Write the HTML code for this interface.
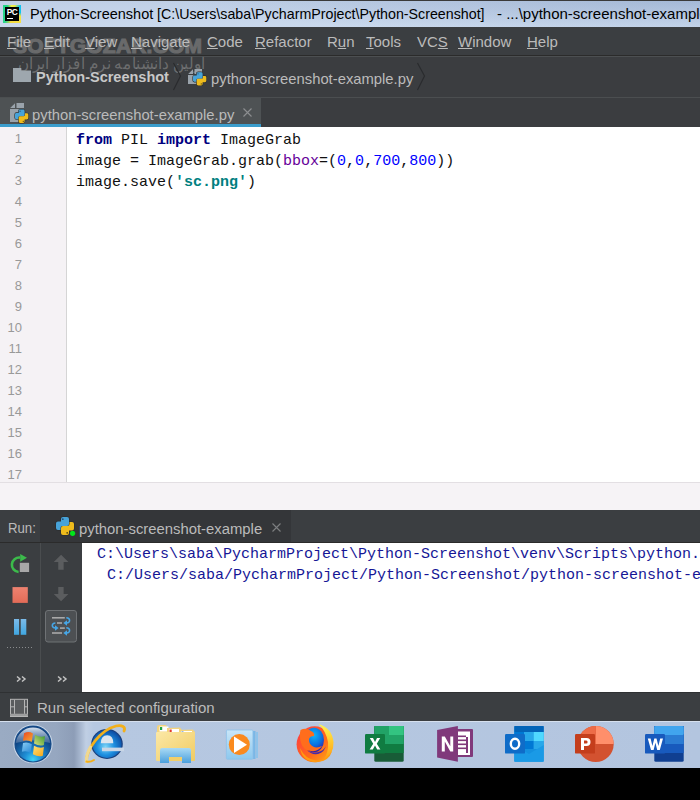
<!DOCTYPE html>
<html><head><meta charset="utf-8">
<style>
*{margin:0;padding:0;box-sizing:border-box}
html,body{width:700px;height:800px;overflow:hidden;background:#000}
body{position:relative;font-family:"Liberation Sans",sans-serif}
.abs{position:absolute}
.nw{white-space:nowrap}
svg{position:absolute;overflow:visible}
#title{left:0;top:0;width:700px;height:27px;background:radial-gradient(ellipse 520px 34px at 100% 0,rgba(70,105,160,.22),rgba(70,105,160,0)),linear-gradient(#bfcfe6,#cad9ed);border-top:1px solid #3a3a3a}
#title .t{top:4px;font-size:15px;color:#000;white-space:nowrap;transform-origin:0 0}
#menu{left:0;top:27px;width:700px;height:29px;background:#3b3e41;border-bottom:1px solid #2b2b2b}
#menu span{position:absolute;top:6px;font-size:15px;color:#bbbbbb;white-space:nowrap}
#menu u{text-decoration:underline;text-decoration-thickness:1px;text-underline-offset:1px}
#nav{left:0;top:56px;width:700px;height:41px;background:#3b3d40;border-top:1px solid #4c4f51}
#tabs{left:0;top:97px;width:700px;height:30px;background:#3b3d40;border-top:1px solid #4b4e50}
#tab{left:0;top:0;width:261px;height:26px;background:#4e5254}
#tabline{left:0;top:26px;width:261px;height:3px;background:#3b9dcc}
#editor{left:0;top:127px;width:700px;height:355px;background:#fff}
#gutter{left:0;top:0;width:67px;height:355px;background:#f5f2f5;border-right:1px solid #d5d5d5}
.ln{position:absolute;left:0;width:22px;text-align:right;font-size:13px;color:#999;line-height:16px}
.code{position:absolute;left:76px;font-family:"Liberation Mono",monospace;font-size:15px;color:#111;white-space:pre;line-height:17px}
.kw{color:#000080;font-weight:bold}
.num{color:#0000ff}
.str{color:#008080;font-weight:bold}
.kwa{color:#660099}
#below{left:0;top:482px;width:700px;height:28px;background:#f6f3f6;border-top:1px solid #e3dfe3}
#runhdr{left:0;top:510px;width:700px;height:33px;background:#3b3e41;border-bottom:1px solid #2b2b2b}
#runtab{left:40px;top:0;width:251px;height:32px;background:#343639}
#runbody{left:0;top:543px;width:700px;height:149px;background:#3b3e41}
#console{left:82px;top:0;width:618px;height:149px;background:#fff}
.con{position:absolute;font-family:"Liberation Mono",monospace;font-size:15px;color:#161696;white-space:pre;line-height:17px}
#status{left:0;top:692px;width:700px;height:29px;background:#3b3e41;border-top:1px solid #2f3133}
#taskbar{left:0;top:721px;width:700px;height:47px;border-top:1px solid #d6e0ee;background:linear-gradient(90deg,#9aabc3 0,#96a7c0 56px,#8d9db7 74px,#a9b9d1 81px,#c0cfe4 86px,#b6c8e1 94px,#b3c5df 700px)}
.wm{color:#696a6b;font-weight:bold;font-size:21px;white-space:nowrap;-webkit-text-stroke:1.1px #696a6b}
</style></head><body>
<svg width="0" height="0" style="position:absolute;left:0;top:0">
<defs>
<g id="pyb"><path d="M7,0 H11 Q13,0 13,2 V7 Q13,9 11,9 H6.5 Q4.5,9 4.5,11 V13 H2 Q0,13 0,11 V6.5 Q0,4.5 2,4.5 H5 V2 Q5,0 7,0 Z"/></g>
<g id="py">
 <use href="#pyb" fill="none" stroke="#2d2f31" stroke-width="1.6"/>
 <use href="#pyb" transform="rotate(180 9 9)" fill="none" stroke="#2d2f31" stroke-width="1.6"/>
 <use href="#pyb" fill="#47a3d9"/>
 <use href="#pyb" transform="rotate(180 9 9)" fill="#eebb1c"/>
 <circle cx="6.8" cy="2.2" r="0.9" fill="#24507a"/>
 <circle cx="11.2" cy="15.8" r="0.9" fill="#5a4a10"/>
</g>
</defs></svg>
<div id="title" class="abs">
  <div class="abs" style="left:3px;top:4px;width:18px;height:18px;background:conic-gradient(from 0deg,#f3ef4c 0deg,#e8e845 20deg,#12c2ee 45deg,#12c2ee 80deg,#f2e24a 105deg,#f4d93c 190deg,#2bd38a 220deg,#21d789 330deg,#f3ef4c 355deg)"></div>
  <div class="abs" style="left:5px;top:6px;width:14px;height:14px;background:#000"></div>
  <div class="abs nw" style="left:6.7px;top:5.7px;font-size:8.4px;font-weight:bold;color:#fff;letter-spacing:-0.5px;line-height:10px">PC</div>
  <div class="abs" style="left:7px;top:17px;width:6px;height:1.2px;background:#fff"></div>
  <div class="abs t" style="left:29.6px;transform:scaleX(.966)">Python-Screenshot</div>
  <div class="abs t" style="left:157.4px;transform:scaleX(.949)">[C:\Users\saba\PycharmProject\Python-Screenshot]</div>
  <div class="abs t" style="left:497px">- ...\python-screenshot-example.py</div>
</div>
<div id="menu" class="abs">
  <div class="abs wm" style="left:13px;top:6.5px;letter-spacing:0.2px">SOFTGOZAR.COM</div>
  <span style="left:7px"><u>F</u>ile</span>
  <span style="left:44px"><u>E</u>dit</span>
  <span style="left:85px"><u>V</u>iew</span>
  <span style="left:131px"><u>N</u>avigate</span>
  <span style="left:207px"><u>C</u>ode</span>
  <span style="left:255px"><u>R</u>efactor</span>
  <span style="left:327px">R<u>u</u>n</span>
  <span style="left:366px"><u>T</u>ools</span>
  <span style="left:417px">VC<u>S</u></span>
  <span style="left:458px"><u>W</u>indow</span>
  <span style="left:527px"><u>H</u>elp</span>
</div>
<div id="nav" class="abs">
  <div class="abs nw" style="left:14px;top:-2px;font-size:15.5px;color:rgba(150,150,150,.55);direction:rtl;width:191px;text-align:right;transform:scaleX(.95);transform-origin:100% 0">اولین دانشنامه نرم افزار ایران</div>
  <svg style="left:13px;top:11px" width="18" height="14" viewBox="0 0 18 14">
    <rect x="0" y="0" width="8.3" height="3" fill="#9ea7ae"/>
    <rect x="0" y="2.5" width="18" height="11.5" fill="#9ea7ae"/>
  </svg>
  <div class="abs nw" style="left:36px;top:12px;font-size:14.5px;font-weight:bold;color:#c8c8c8">Python-Screenshot</div>
  <svg style="left:170px;top:5px" width="14" height="30" viewBox="0 0 14 30"><path d="M3.5,1 L10.5,14 L3.5,28" fill="none" stroke="#2a2c2e" stroke-width="1.2"/></svg>
  <svg style="left:188px;top:12px" width="18" height="20" viewBox="0 0 18 20">
    <path d="M0.2,5 L5,0.2 L5,5 Z" fill="#9aa3ab"/>
    <rect x="6.5" y="0" width="7.5" height="5" fill="#9aa3ab"/>
    <rect x="0" y="6" width="14" height="9" fill="#9aa3ab"/>
    <g transform="translate(5,3.2) scale(0.74)"><use href="#py"/></g>
  </svg>
  <div class="abs nw" style="left:211px;top:14px;font-size:14.8px;color:#bbb">python-screenshot-example.py</div>
  <svg style="left:414px;top:5px" width="14" height="30" viewBox="0 0 14 30"><path d="M3.5,1 L10.5,14 L3.5,28" fill="none" stroke="#2a2c2e" stroke-width="1.2"/></svg>
</div>
<div id="tabs" class="abs">
  <div id="tab" class="abs"></div>
  <div id="tabline" class="abs"></div>
  <svg style="left:10px;top:5px" width="18" height="20" viewBox="0 0 18 20">
    <path d="M0.2,5 L5,0.2 L5,5 Z" fill="#9aa3ab"/>
    <rect x="6.5" y="0" width="7.5" height="5" fill="#9aa3ab"/>
    <rect x="0" y="6" width="14" height="13" fill="#9aa3ab"/>
    <g transform="translate(5,6.6) scale(0.74)"><use href="#py"/></g>
  </svg>
  <div class="abs nw" style="left:32px;top:8.5px;font-size:14.8px;color:#bbb">python-screenshot-example.py</div>
  <svg style="left:243px;top:10px" width="9" height="9" viewBox="0 0 9 9"><path d="M0.5,0.5 L8.5,8.5 M8.5,0.5 L0.5,8.5" stroke="#8d8f91" stroke-width="1.1"/></svg>
</div>
<div id="editor" class="abs">
  <div id="gutter" class="abs"></div>
  <div class="ln" style="top:4px">1</div><div class="ln" style="top:25px">2</div><div class="ln" style="top:46px">3</div><div class="ln" style="top:67px">4</div><div class="ln" style="top:88px">5</div><div class="ln" style="top:109px">6</div><div class="ln" style="top:130px">7</div><div class="ln" style="top:151px">8</div><div class="ln" style="top:172px">9</div><div class="ln" style="top:193px">10</div><div class="ln" style="top:214px">11</div><div class="ln" style="top:235px">12</div><div class="ln" style="top:256px">13</div><div class="ln" style="top:277px">14</div><div class="ln" style="top:298px">15</div><div class="ln" style="top:319px">16</div><div class="ln" style="top:340px">17</div>
  <div class="code" style="top:5px"><span class="kw">from</span> PIL <span class="kw">import</span> ImageGrab</div>
  <div class="code" style="top:26px">image = ImageGrab.grab(<span class="kwa">bbox</span>=(<span class="num">0</span>,<span class="num">0</span>,<span class="num">700</span>,<span class="num">800</span>))</div>
  <div class="code" style="top:47px">image.save(<span class="str">'sc.png'</span>)</div>
</div>
<div id="below" class="abs"></div>
<div id="runhdr" class="abs">
  <div id="runtab" class="abs"></div>
  <div class="abs nw" style="left:8px;top:9px;font-size:15px;color:#bbb;transform:scaleX(.88);transform-origin:0 0">Run:</div>
  <svg style="left:56px;top:7px" width="18" height="18" viewBox="0 0 18 18"><use href="#py"/><circle cx="16.6" cy="16.3" r="2.6" fill="#00e61a"/></svg>
  <div class="abs nw" style="left:79px;top:11px;font-size:14.85px;color:#bbb">python-screenshot-example</div>
  <svg style="left:272px;top:13px" width="9" height="9" viewBox="0 0 9 9"><path d="M0.5,0.5 L8.5,8.5 M8.5,0.5 L0.5,8.5" stroke="#7d7f81" stroke-width="1.1"/></svg>
</div>
<div id="runbody" class="abs">
  <div class="abs" style="left:40px;top:0;width:1px;height:149px;background:#4a4d4f"></div>
  <svg style="left:0;top:0" width="82" height="149" viewBox="0 0 82 149">
    <defs><linearGradient id="pz" x1="0" y1="0" x2="0" y2="1"><stop offset="0" stop-color="#7cbbe9"/><stop offset="1" stop-color="#3fa6e0"/></linearGradient>
    <linearGradient id="stp" x1="0" y1="0" x2="0" y2="1"><stop offset="0" stop-color="#ee8270"/><stop offset="1" stop-color="#e36b57"/></linearGradient></defs>
    <ellipse cx="19.6" cy="21.8" rx="7.4" ry="7.2" fill="none" stroke="#3dbb4c" stroke-width="2.6" stroke-dasharray="23.5 100" transform="rotate(-90 19.6 21.8) scale(1 1)" style="display:none"/>
    <path d="M20,14.6 A7.4,7.2 0 0 0 18.6,29" fill="none" stroke="#3cba4b" stroke-width="2.6"/>
    <path d="M20.2,11 L27,14.7 L20.2,18.8 Z" fill="#3cba4b"/>
    <rect x="19.8" y="19.8" width="9.3" height="9.2" fill="#a8a8a8"/>
    <rect x="12.5" y="44.1" width="15.3" height="15.8" fill="url(#stp)"/>
    <rect x="14" y="76" width="5.1" height="15.8" fill="url(#pz)"/>
    <rect x="20.7" y="76" width="5.6" height="15.8" fill="url(#pz)"/>
    <g fill="#8a8c8e">
      <rect x="7" y="104" width="1" height="1"/><rect x="10" y="104" width="1" height="1"/><rect x="13" y="104" width="1" height="1"/><rect x="16" y="104" width="1" height="1"/><rect x="19" y="104" width="1" height="1"/><rect x="22" y="104" width="1" height="1"/><rect x="25" y="104" width="1" height="1"/><rect x="28" y="104" width="1" height="1"/><rect x="31" y="104" width="1" height="1"/>
    </g>
    <path d="M17,133.5 L20,136 L17,138.5 M22,133.5 L25,136 L22,138.5" fill="none" stroke="#c4c4c4" stroke-width="1.5"/>
    <path d="M58,133.5 L61,136 L58,138.5 M63,133.5 L66,136 L63,138.5" fill="none" stroke="#c4c4c4" stroke-width="1.5"/>
    <path d="M61.1,11.8 L68.4,18.9 L63.65,18.9 L63.65,26.75 L58.25,26.75 L58.25,18.9 L53.75,18.9 Z" fill="#5b5d5f"/>
    <path d="M61.1,58.3 L68.4,51.1 L63.65,51.1 L63.65,44 L58.25,44 L58.25,51.1 L53.75,51.1 Z" fill="#5b5d5f"/>
    <rect x="45.5" y="67.5" width="31" height="31.5" rx="2.5" fill="#4d5053" stroke="#6f7275" stroke-width="1"/>
    <g fill="#a9a9a9">
      <rect x="52" y="74" width="12.8" height="1.6"/>
      <rect x="57" y="79.2" width="5" height="1.6"/>
      <rect x="60" y="84.3" width="4.8" height="1.6"/>
      <rect x="52" y="89.2" width="10" height="1.6"/>
    </g>
    <g fill="none" stroke="#46a6e6" stroke-width="1.5">
      <path d="M66.3,74.8 Q69.6,75 69.6,77.5 Q69.6,79.8 66.5,79.9"/>
      <path d="M55.4,79.9 Q52.3,80 52.3,82.5 Q52.3,84.9 55.4,85"/>
      <path d="M66.3,84.8 Q69.6,85 69.6,87.5 Q69.6,89.8 66.5,89.9"/>
    </g>
    <g fill="#46a6e6">
      <path d="M63.4,80 L67,77.2 L67,82.8 Z"/>
      <path d="M58.6,85 L55,82.2 L55,87.8 Z"/>
      <path d="M63.4,90 L67,87.2 L67,92.8 Z"/>
    </g>
  </svg>
  
  <div id="console" class="abs">
    <div class="con" style="left:15px;top:3px">C:\Users\saba\PycharmProject\Python-Screenshot\venv\Scripts\python.exe</div>
    <div class="con" style="left:25px;top:24px">C:/Users/saba/PycharmProject/Python-Screenshot/python-screenshot-example.py</div>
  </div>
</div>
<div id="status" class="abs">
  <svg style="left:10px;top:5px" width="18" height="20" viewBox="0 0 18 20">
    <rect x="0.5" y="1.3" width="17" height="15" fill="#5a5c5e" stroke="#b5b5b5" stroke-width="1"/>
    <rect x="4" y="1.8" width="1" height="14" fill="#b5b5b5"/>
    <rect x="14" y="1.8" width="1" height="14" fill="#b5b5b5"/>
    <rect x="1" y="8.3" width="3" height="1" fill="#b5b5b5"/>
    <rect x="15" y="8.3" width="3" height="1" fill="#b5b5b5"/>
    <rect x="0" y="17.2" width="18" height="1.8" fill="#b5b5b5"/>
  </svg>
  <div class="abs nw" style="left:37px;top:6px;font-size:15px;color:#bbb">Run selected configuration</div>
</div>
<div id="taskbar" class="abs">
  <svg style="left:0;top:-1px" width="700" height="47" viewBox="0 0 700 47">
    <defs>
      <radialGradient id="orbB" cx=".5" cy=".95" r=".7"><stop offset="0" stop-color="#3fd3f5"/><stop offset=".35" stop-color="#1f8fd6"/><stop offset="1" stop-color="#0d3f7e"/></radialGradient>
      <linearGradient id="orbT" x1="0" y1="0" x2="0" y2="1"><stop offset="0" stop-color="#dfe8f2" stop-opacity=".95"/><stop offset="1" stop-color="#6f8db3" stop-opacity=".5"/></linearGradient>
      <linearGradient id="flR" x1="0" y1="0" x2="1" y2="1"><stop offset="0" stop-color="#e8401e"/><stop offset="1" stop-color="#f9b233"/></linearGradient>
      <linearGradient id="flG" x1="0" y1="1" x2="1" y2="0"><stop offset="0" stop-color="#d6dc7a"/><stop offset="1" stop-color="#3f9d35"/></linearGradient>
      <linearGradient id="flB" x1="0" y1="0" x2="1" y2="1"><stop offset="0" stop-color="#8fd0f5"/><stop offset="1" stop-color="#2386d6"/></linearGradient>
      <linearGradient id="flY" x1="0" y1="0" x2="1" y2="1"><stop offset="0" stop-color="#fde27a"/><stop offset="1" stop-color="#f7a414"/></linearGradient>
      <radialGradient id="ieB" cx=".45" cy=".6" r=".6"><stop offset="0" stop-color="#7fd6f7"/><stop offset=".5" stop-color="#1d8fe0"/><stop offset="1" stop-color="#0c4ea6"/></radialGradient>
      <linearGradient id="fold" x1="0" y1="0" x2="1" y2="1"><stop offset="0" stop-color="#fbe8a6"/><stop offset="1" stop-color="#f0cb62"/></linearGradient>
      <linearGradient id="stand" x1="0" y1="0" x2="0" y2="1"><stop offset="0" stop-color="#a9daf5"/><stop offset="1" stop-color="#4a9fdc"/></linearGradient>
      <linearGradient id="wmp" x1="0" y1="0" x2="0" y2="1"><stop offset="0" stop-color="#c9e6f8"/><stop offset="1" stop-color="#8cc8ee"/></linearGradient>
      <linearGradient id="ffy" x1="0" y1="0" x2="0" y2="1"><stop offset="0" stop-color="#fff44f"/><stop offset="1" stop-color="#ff980e"/></linearGradient>
      <linearGradient id="ffr" x1="0" y1="0" x2="1" y2="1"><stop offset="0" stop-color="#ff3647"/><stop offset=".6" stop-color="#ff6a1a"/><stop offset="1" stop-color="#ffb018"/></linearGradient>
      <radialGradient id="ffb" cx=".5" cy=".3" r=".7"><stop offset="0" stop-color="#0fb5f7"/><stop offset=".6" stop-color="#0b6fe0"/><stop offset="1" stop-color="#3a1aa0"/></radialGradient>
    </defs>
    <!-- start orb -->
    <circle cx="33" cy="23" r="19.6" fill="#cfdbea"/>
    <circle cx="33" cy="23" r="18.6" fill="#184d8a"/>
    <circle cx="33" cy="23" r="17.4" fill="url(#orbB)"/>
    <path d="M15.8,22 A17.3,17.3 0 0 1 50.2,22 Q33,17 15.8,22 Z" fill="url(#orbT)"/>
    <g transform="translate(34,22.5) scale(1.1) skewY(8)">
      <path d="M-9,-8 Q-5,-11 -1,-9 L-2,-1 Q-6,-3 -10,-1 Z" fill="url(#flR)"/>
      <path d="M1,-8 Q5,-6 10,-8 L9,0 Q5,2 0,0 Z" fill="url(#flG)"/>
      <path d="M-10,1 Q-6,-1 -2,1 L-3,9 Q-7,7 -11,9 Z" fill="url(#flB)"/>
      <path d="M0,2 Q5,4 9,2 L8,10 Q4,12 -1,10 Z" fill="url(#flY)"/>
    </g>
    <!-- IE -->
    <ellipse cx="107" cy="23" rx="15.8" ry="15" fill="#1b3f7c"/>
    <ellipse cx="107" cy="23" rx="14.6" ry="13.9" fill="url(#ieB)"/>
    <path d="M100.8,22.3 Q101,14.2 107.2,14.2 Q113.3,14.2 113.3,22.3 Z" fill="#dde5ee"/>
    <rect x="102" y="26.6" width="22" height="3.6" fill="#c9d6e6"/>
    <path d="M86.5,40.5 C86,29 100,9 116,5 C122,3.6 126,6 124,10" fill="none" stroke="#f2b01c" stroke-width="2.8" stroke-linecap="round"/>
    <path d="M86.5,40.5 C86.3,36 87.5,31 90.5,26" fill="none" stroke="#f0d890" stroke-width="3.2" stroke-linecap="round"/><path d="M86.5,40.5 Q90,41.5 94,39" fill="none" stroke="#f2b01c" stroke-width="2" stroke-linecap="round"/>
    <!-- folder -->
    <path d="M157,6 Q157,4 159,4 L166,4 L168,7 L168,11 L157,11 Z" fill="#f3d47e"/>
    <rect x="159.5" y="5.5" width="9" height="5" fill="#fff"/>
    <rect x="160" y="6" width="2.2" height="3" fill="#22a346"/>
    <path d="M167,7 L180,6.5 L182,9 L182,12 L167,12 Z" fill="#f3d47e"/>
    <rect x="169" y="8" width="10" height="4" fill="#fff"/>
    <rect x="169.5" y="8.5" width="2.2" height="2.8" fill="#e23b2b"/>
    <path d="M179,9 L193,8.5 L195,11 L195,14 L179,14 Z" fill="#f3d47e"/>
    <rect x="181" y="10" width="11" height="3.5" fill="#fff"/>
    <rect x="181.5" y="10.5" width="2" height="2.6" fill="#2a6fd6"/>
    <rect x="156" y="11" width="39" height="29" rx="1" fill="url(#fold)"/>
    <path d="M160,29 Q160,27 162,27 L189,27 Q191,27 191,29 L191,42 L182,42 L182,36 L169,36 L169,42 L160,42 Z" fill="url(#stand)"/>
    <rect x="169" y="36" width="13" height="4" fill="#f2cf6a"/>
    <!-- WMP -->
    <rect x="253" y="10" width="2.5" height="28" fill="#7ab7e6"/>
    <rect x="256" y="11" width="2" height="26" fill="#8ec3ea"/>
    <rect x="226.4" y="9" width="26.5" height="29.3" rx="1" fill="url(#wmp)" stroke="#8ec2ea" stroke-width=".8"/>
    <circle cx="239.3" cy="23.6" r="10.5" fill="#fa8a1e"/>
    <path d="M234,15.5 L247,23.8 L234,32 Z" fill="#fff"/>
    <!-- firefox -->
    <circle cx="314.6" cy="23.3" r="18" fill="url(#ffr)"/>
    <ellipse cx="314" cy="19" rx="10" ry="12.2" fill="url(#ffb)"/>
    <path d="M300.5,9 Q306,6 311,10 Q315,12 314,15 Q309,15 309,19 Q309,23 313,25.5 Q317,27.5 322,25 Q318,31 311,30 Q303,29 301,22 Q299,15 300.5,9 Z" fill="#ff6d1c"/>
    <path d="M307,29 Q313,33.5 321,30 Q325,28 326,24 Q325,31 318,33 Q311,34 307,29 Z" fill="#4a2aa8"/>
    <path d="M318.5,3 Q332,7 333.5,21 Q334,34 323,40 Q329,31 328,21 Q326,10 318.5,3 Z" fill="url(#ffy)"/>
    <path d="M300,27 Q305,38 316,39.5 Q326,40 332,30 Q329,41 316,41.3 Q302,40.5 300,27 Z" fill="#ff9b12"/>
    <!-- Excel -->
    <rect x="374.3" y="5" width="29.4" height="35.8" rx="1.5" fill="#185c37"/>
    <rect x="374.3" y="5" width="29.4" height="27" fill="#107c41"/>
    <rect x="374.3" y="5" width="29.4" height="18" fill="#21a366"/>
    <rect x="389" y="5" width="14.7" height="9" fill="#33c481"/>
    <rect x="365" y="13" width="20" height="19.6" rx="1.2" fill="#107c41"/>
    <path d="M369.8,17 L373,17 L375,21 L377,17 L380.2,17 L376.8,22.8 L380.4,28.6 L377.2,28.6 L375,24.6 L372.8,28.6 L369.6,28.6 L373.2,22.8 Z" fill="#fff"/>
    <!-- OneNote -->
    <path d="M456,8 L472,8 Q473,8 473,9 L473,35 Q473,36 472,36 L456,36 Z" fill="#80397b"/>
    <rect x="458" y="10.5" width="12" height="23.5" fill="#fff"/>
    <g fill="#80397b"><rect x="458" y="14.5" width="8" height="1.6"/><rect x="458" y="18.5" width="8" height="1.6"/><rect x="458" y="22.5" width="8" height="1.6"/><rect x="458" y="26.5" width="8" height="1.6"/><rect x="466" y="16" width="2" height="16"/></g>
    <path d="M437.1,9 L457.9,5.1 L457.9,40.8 L437.1,36.5 Z" fill="#80397b"/>
    <path d="M441.8,15.4 L444.8,15.4 L450.3,25.2 L450.3,15.4 L453.2,15.4 L453.2,30.4 L450.3,30.4 L444.8,20.6 L444.8,30.4 L441.8,30.4 Z" fill="#fff"/>
    <!-- Outlook -->
    <rect x="514.3" y="5" width="29.4" height="35.8" rx="1.5" fill="#1490df"/>
    <rect x="514.3" y="5" width="29.4" height="6" fill="#0364b8"/>
    <rect x="524" y="11" width="9.7" height="9" fill="#28a8ea"/>
    <rect x="533.7" y="11" width="10" height="9" fill="#50d9ff"/>
    <rect x="514.3" y="11" width="9.7" height="9" fill="#0078d4"/>
    <rect x="524" y="20" width="9.7" height="8" fill="#0078d4"/>
    <rect x="533.7" y="20" width="10" height="8" fill="#28a8ea"/>
    <path d="M514.3,24 L529,33 L543.7,24 L543.7,40.8 L514.3,40.8 Z" fill="#1a9ae6"/>
    <rect x="505" y="13" width="20" height="19.6" rx="1.2" fill="#0f6cc8"/>
    <ellipse cx="515" cy="22.8" rx="4.2" ry="5" fill="none" stroke="#fff" stroke-width="2.4"/>
    <!-- PowerPoint -->
    <circle cx="595.7" cy="23" r="18" fill="#d35230"/>
    <path d="M595.7,23 L595.7,5 A18,18 0 0 1 613.7,23 Z" fill="#ff8f6b"/>
    <path d="M595.7,23 L595.7,5 A18,18 0 0 0 577.7,23 Z" fill="#ed6c47"/>
    <rect x="575" y="13" width="20" height="19.6" rx="1.2" fill="#c43e1c"/>
    <path d="M581,17 L586.5,17 Q590.5,17 590.5,21 Q590.5,25 586.5,25 L584,25 L584,29 L581,29 Z M584,19.5 L584,22.5 L586.3,22.5 Q587.6,22.5 587.6,21 Q587.6,19.5 586.3,19.5 Z" fill="#fff" fill-rule="evenodd"/>
    <!-- Word -->
    <rect x="654.3" y="5" width="29.4" height="35.8" rx="1.5" fill="#103f91"/>
    <rect x="654.3" y="5" width="29.4" height="27" fill="#185abd"/>
    <rect x="654.3" y="5" width="29.4" height="18" fill="#2b7cd3"/>
    <rect x="654.3" y="5" width="29.4" height="9" rx="1.5" fill="#41a5ee"/>
    <rect x="645" y="13" width="20" height="19.6" rx="1.2" fill="#185abd"/>
    <path d="M647.8,17.5 L650.6,17.5 L652.4,25 L654.3,17.5 L656.5,17.5 L658.4,25 L660.2,17.5 L663,17.5 L659.8,29 L657.2,29 L655.4,21.8 L653.6,29 L651,29 Z" fill="#fff"/>
  </svg>
</div>
</body></html>
